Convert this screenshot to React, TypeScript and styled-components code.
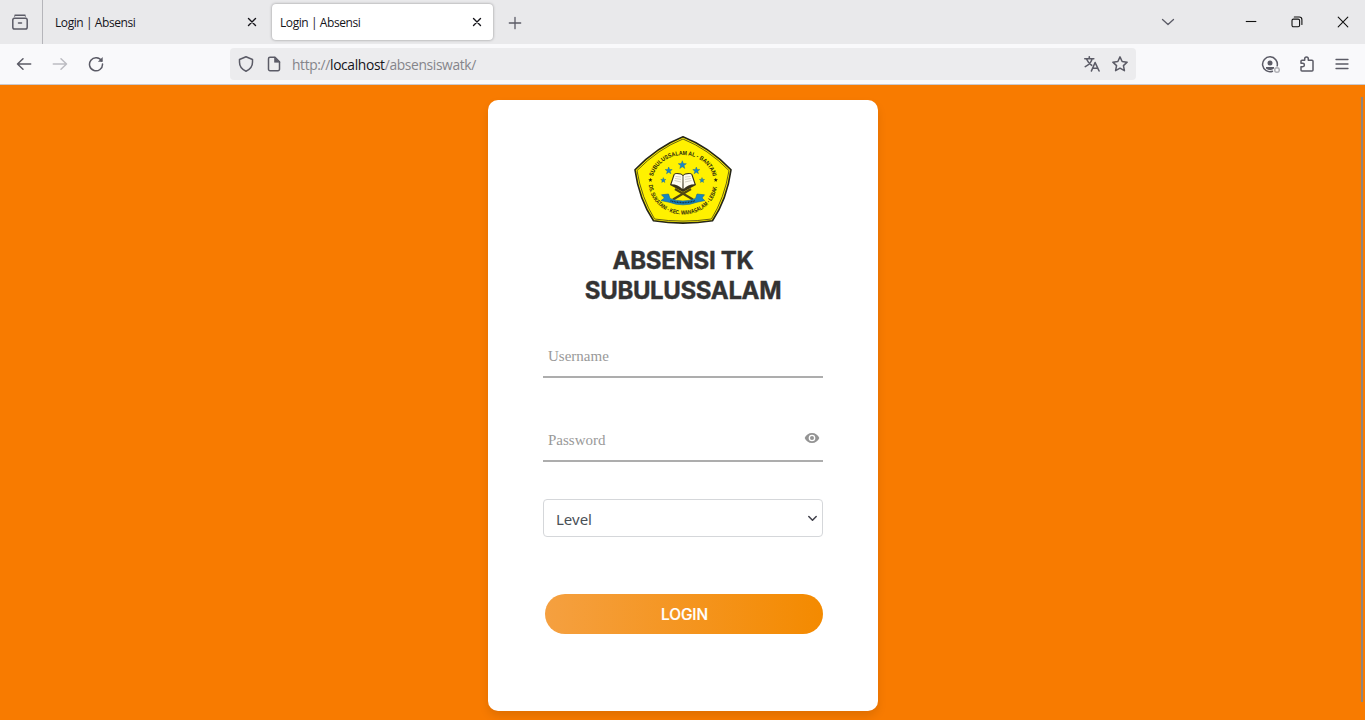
import React from "react";
import styled, { createGlobalStyle } from "styled-components";

const GlobalStyle = createGlobalStyle`
  * { box-sizing: border-box; }
  body { margin: 0; overflow: hidden; font-family: "Noto Sans", "Open Sans", sans-serif; }
`;

const Window = styled.div`
  display: flex;
  flex-direction: column;
  width: 100%;
  height: 100vh;
  overflow: hidden;
`;

const TabBar = styled.div`
  display: flex;
  align-items: center;
  flex: none;
  height: 44px;
  background: #e9e9eb;
`;

const Overview = styled.div`
  display: flex;
  align-items: center;
  justify-content: center;
  width: 43px;
  height: 44px;
  padding-right: 2px;
  border-right: 1px solid #b5b5ba;
`;

const Tab = styled.div<{ $active?: boolean }>`
  display: flex;
  align-items: center;
  justify-content: space-between;
  width: ${(p) => (p.$active ? 221 : 225)}px;
  height: 36px;
  margin-left: ${(p) => (p.$active ? 4 : 0)}px;
  padding: 0 10px 0 ${(p) => (p.$active ? 8 : 12)}px;
  border-radius: 4px;
  background: ${(p) => (p.$active ? "#fff" : "transparent")};
  box-shadow: ${(p) => (p.$active ? "0 0 3px rgba(0,0,0,.38)" : "none")};
`;

const TabTitle = styled.span`
  padding-top: 2px;
  font: 12px/18px "Open Sans", sans-serif;
  letter-spacing: -0.42px;
  color: #15141a;
`;

const NewTab = styled.div`
  display: flex;
  margin-left: 14px;
  padding-top: 1px;
`;

const WindowControls = styled.div`
  display: flex;
  align-items: center;
  margin-left: auto;
  padding-right: 16px;
`;

const ControlSlot = styled.div<{ $gap?: number }>`
  display: flex;
  margin-left: ${(p) => p.$gap ?? 0}px;
`;

const Toolbar = styled.div`
  display: flex;
  align-items: center;
  flex: none;
  height: 41px;
  padding: 0 15px 0 16px;
  background: #f9f9fb;
  border-bottom: 1px solid #c9c9ce;
`;

const NavButtons = styled.div`
  display: flex;
  gap: 20px;
  width: 214px;
`;

const AddressBar = styled.div`
  display: flex;
  align-items: center;
  width: 906px;
  height: 32px;
  padding: 0 8px;
  border-radius: 4px;
  background: #ececee;
`;

const Url = styled.div`
  flex: 1;
  margin-left: 10px;
  padding-top: 2px;
  font: 13.8px/20px "Open Sans", sans-serif;
  letter-spacing: -0.35px;
  color: #85858a;
`;

const Host = styled.span`
  color: #15141a;
`;

const AddressIcons = styled.div`
  display: flex;
  gap: 12px;
`;

const ToolIcons = styled.div`
  display: flex;
  align-items: center;
  gap: 19px;
  margin-left: auto;
`;

const Page = styled.main`
  position: relative;
  flex: 1;
  display: flex;
  justify-content: center;
  align-items: flex-start;
  padding-top: 15px;
  background: #f87b00;
`;

const ScrollThumb = styled.div`
  position: absolute;
  top: 12px;
  right: 2px;
  width: 2px;
  height: 605px;
  background: #8b8580;
`;

const Card = styled.form`
  display: flex;
  flex-direction: column;
  align-items: center;
  width: 390px;
  height: 611px;
  margin-left: 1px;
  padding: 34px 55px 0;
  border-radius: 10px;
  background: #fff;
  box-shadow: 0 5px 10px rgba(0, 0, 0, 0.1);
`;

const Title = styled.h1`
  display: flex;
  flex-direction: column;
  align-items: center;
  margin: 20px 0 0;
  font: 700 24px/30px Inter, sans-serif;
  color: #333;
  -webkit-text-stroke: 0.4px #333;
`;

const TitleLine = styled.span<{ $spacing: number }>`
  letter-spacing: ${(p) => p.$spacing}px;
  white-space: nowrap;
`;

const Field = styled.label<{ $top: number }>`
  display: flex;
  justify-content: space-between;
  align-items: flex-start;
  width: 280px;
  height: 44px;
  margin-top: ${(p) => p.$top}px;
  padding: 12px 4px 0 5px;
  border-bottom: 2px solid #adadad;
  font: 15px/20px "Liberation Serif", serif;
  color: #999;
`;

const EyeIcon = styled.svg`
  width: 16px;
  height: 16px;
  margin: -0.5px -0.5px 0 0;
  fill: #949494;
`;

const LevelSelect = styled.div`
  display: flex;
  align-items: center;
  justify-content: space-between;
  width: 280px;
  height: 38px;
  margin-top: 37px;
  padding: 2px 4px 0 12px;
  border: 1px solid #d5d7da;
  border-radius: 4px;
  font: 15px/24px "Noto Sans", sans-serif;
  color: #495057;
`;

const LoginButton = styled.button`
  width: 278px;
  height: 40px;
  margin: 57px 0 0 2px;
  padding: 2px 0 0 1px;
  border: 0;
  border-radius: 20px;
  background: linear-gradient(to right, #f5a040, #f48a00);
  font: 500 15.4px/38px Inter, sans-serif;
  letter-spacing: -0.05px;
  color: #fff;
  -webkit-text-stroke: 0.2px #fff;
`;

const Icon = ({ size = 16, color = "#5b5b66", w = 1.3, children }: {
  size?: number; color?: string; w?: number; children: React.ReactNode;
}) => (
  <svg width={size} height={size} viewBox={`0 0 ${size} ${size}`} fill="none" stroke={color}
    strokeWidth={w} strokeLinecap="round" strokeLinejoin="round">{children}</svg>
);

const CloseIcon = () => (
  <Icon size={12} color="#15141a" w={1.4}><path d="M2.500 2.500l7 7M9.500 2.500l-7 7" /></Icon>
);

const starPath = (cx: number, cy: number, r: number) =>
  Array.from({ length: 10 }, (_, i) => {
    const a = (Math.PI / 5) * i - Math.PI / 2;
    const d = i % 2 ? r * 0.42 : r;
    return `${i ? "L" : "M"}${(cx + d * Math.cos(a)).toFixed(2)} ${(cy + d * Math.sin(a)).toFixed(2)}`;
  }).join("") + "Z";

const Emblem = () => (
  <svg width="100" height="92" viewBox="0 0 100 92">
    <defs>
      <path id="upperArc" d="M19.500 48A30.500 27 0 0 1 80.500 48" />
      <path id="lowerArc" d="M15.8 49A34 31.3 0 0 0 84.2 49" />
    </defs>
    <path d="M50 2.8Q76 13 98 35.8Q94 65 79.5 86.8Q50 91.5 20.5 86.8Q6 65 2 35.8Q24 13 50 2.8Z"
      fill="#fff100" stroke="#252516" strokeWidth="1.6" strokeLinejoin="round" />
    <path d="M50 5Q75 15 96 36.6Q91.5 64 78.4 85Q50 89.2 21.6 85Q8.5 64 4 36.6Q25 15 50 5Z"
      fill="none" stroke="#55511b" strokeWidth=".9" />
    <g fill="#24230f" fontFamily="Liberation Sans, sans-serif" fontWeight="700" fontSize="6">
      <text><textPath href="#upperArc" startOffset="5.5" textLength="79" lengthAdjust="spacingAndGlyphs">SUBULUSSALAM AL - BANTANI</textPath></text>
      <text fontSize="5.8"><textPath href="#lowerArc" startOffset="2" textLength="97" lengthAdjust="spacingAndGlyphs">DS. SUKATANI - KEC. WANASALAM - LEBAK</textPath></text>
    </g>
    <path d={starPath(17.4, 46, 2.3) + starPath(82.8, 46, 2.3)} fill="#24230f" />
    <path d={starPath(49.3, 31, 4.3) + starPath(35.7, 36.7, 3.7) + starPath(63.3, 36.7, 3.7) + starPath(30.3, 46.3, 2.7) + starPath(69, 46.3, 2.7)}
      fill="#1688c9" stroke="#176391" strokeWidth=".4" />
    <path d="M42 55L60 65.5M58 55L40 65.5" stroke="#514710" strokeWidth="2.2" />
    <path d="M40.5 40.5L37 51L50 58L63 51L59.5 40.5L58 39.3Q52 38.5 50 41Q48 38.5 42 39.3Z" fill="#39331a" />
    <path d="M41.8 40.2Q48 39.7 49.6 42L49.4 55Q45 50.5 38.5 50.3ZM58.2 40.2Q52 39.7 50.4 42L50.6 55Q55 50.5 61.5 50.3Z" fill="#fffdf0" />
    <path d="M42.5 42.5L48 43M42 44.5L48 45.4M41.5 46.5L48 48M57.5 42.5L52 43M58 44.5L52 45.4M58.5 46.5L52 48" stroke="#aaa695" strokeWidth=".5" />
    <path d="M28.5 60.8L35.5 60L37 64.5Q50 69.5 62.5 64.5L64 60L71.5 60.8L69 64L71.8 66.6L64 68.2Q50 73.5 36 68.2L28 66.6L31.5 64Z"
      fill="#1587c5" stroke="#17648f" strokeWidth=".6" />
    <path d="M37.5 66.8Q50 70.5 62 66.8" fill="none" stroke="#15364d" strokeWidth="1.5" strokeDasharray="1.1 .5" />
  </svg>
);

const BrowserChrome = () => (
  <>
    <TabBar>
      <Overview>
        <Icon w={1.5}><path d="M3 1.3h10" /><rect x=".8" y="4.2" width="14.4" height="10.8" rx="1.8" /><path d="M2.3 3l1-1.5M13.7 3l-1-1.5" strokeWidth=".7" /><path d="M6.5 9h3" /></Icon>
      </Overview>
      <Tab><TabTitle>Login | Absensi</TabTitle><CloseIcon /></Tab>
      <Tab $active><TabTitle>Login | Absensi</TabTitle><CloseIcon /></Tab>
      <NewTab><Icon><path d="M8 2.3v11.4M2.3 8h11.4" /></Icon></NewTab>
      <WindowControls>
        <ControlSlot><Icon><path d="M2.5 5.5L8 10.6l5.5-5.1" /></Icon></ControlSlot>
        <ControlSlot $gap={69}><Icon size={12} color="#111" w={1.1}><path d="M.8 5.5h10.5" strokeLinecap="butt" /></Icon></ControlSlot>
        <ControlSlot $gap={34}><Icon size={12} color="#111" w={1.1}><rect x="1" y="3.1" width="7.6" height="7.6" rx="1.4" /><path d="M3.3 1h4.9a2.7 2.7 0 0 1 2.7 2.7v4.8" /></Icon></ControlSlot>
        <ControlSlot $gap={34}><Icon size={12} color="#111" w={1.1}><path d="M1.2 1.2l9.6 9.6M10.8 1.2l-9.6 9.6" /></Icon></ControlSlot>
      </WindowControls>
    </TabBar>
    <Toolbar>
      <NavButtons>
        <Icon w={1.5}><path d="M14.7 8H1.5M7 2.7L1.5 8 7 13.3" /></Icon>
        <Icon w={1.5} color="#bcbcc2"><path d="M1.3 8h13.2M9 2.7L14.5 8 9 13.3" /></Icon>
        <Icon w={1.5}><path d="M13.6 5A6.5 6.5 0 1 0 14.5 8" /><path d="M14.7 1v4.8H9.9z" fill="#5b5b66" stroke="none" /></Icon>
      </NavButtons>
      <AddressBar>
        <Icon w={1.5}><path d="M8 .8l6.5 2.7v2.8c0 4-2 7-6.5 8.9C3.5 13.3 1.5 10.3 1.5 6.3V3.5z" /></Icon>
        <ControlSlot $gap={12}><Icon w={1.5}><path d="M4 1.3h5l4.5 4.5v7.4a1.5 1.5 0 0 1-1.5 1.5H4A1.5 1.5 0 0 1 2.5 13.2V2.8A1.5 1.5 0 0 1 4 1.3z" /><path d="M8.5 1.3v5h5z" fill="#5b5b66" strokeWidth=".6" /></Icon></ControlSlot>
        <Url>http://<Host>localhost</Host>/absensiswatk/</Url>
        <AddressIcons>
          <Icon w={1.6}><path d="M.8 2.8h9M5.3.8v2M8 2.8C7.4 6.3 5 8.6 1.3 10.6M2.8 3.5C4 6.2 5.4 8 7.6 9.3M7.4 15l3.7-8.5L15.1 15M8.6 12.3h5.3" /></Icon>
          <Icon w={1.5}><path d="M8 .9l2.15 4.6 5 .65-3.7 3.5.95 5L8 12.2l-4.4 2.45.95-5L.85 6.15l5-.65z" /></Icon>
        </AddressIcons>
      </AddressBar>
      <ToolIcons>
        <Icon size={19} w={1.5}><path d="M16.2 10.8A7.4 7.4 0 1 0 11.5 16.2" /><circle cx="9" cy="8" r="2.5" fill="#5b5b66" stroke="none" /><path d="M5 12.100h8v1.300Q9 16.700 5 13.400z" fill="#5b5b66" stroke="none" /><circle cx="16" cy="15" r="2.300" stroke="#b1b1b6" /></Icon>
        <Icon w={1.5}><path d="M5.7 4.3V2.8a1.8 1.8 0 0 1 3.6 0v1.5H13a1 1 0 0 1 1 1V14a1 1 0 0 1-1 1H3a1 1 0 0 1-1-1v-3.3h1.7a1.700 1.700 0 0 0 0-3.400H2v-2a1 1 0 0 1 1-1z" /></Icon>
        <Icon><path d="M2 3.500h12M2 8h12M2 12.500h12" /></Icon>
      </ToolIcons>
    </Toolbar>
  </>
);

export default function App() {
  return (
    <Window>
      <GlobalStyle />
      <BrowserChrome />
      <Page>
        <Card>
          <Emblem />
          <Title>
            <TitleLine $spacing={-0.3}>ABSENSI TK</TitleLine>
            <TitleLine $spacing={-0.37}>SUBULUSSALAM</TitleLine>
          </Title>
          <Field $top={28}>Username</Field>
          <Field $top={40}>
            Password
            <EyeIcon viewBox="0 0 24 24">
              <path fillRule="evenodd" d="M12 4.5C7 4.5 2.73 7.61 1 12c1.73 4.39 6 7.5 11 7.5s9.27-3.11 11-7.5c-1.73-4.39-6-7.5-11-7.5zM12 17a5 5 0 1 1 0-10 5 5 0 0 1 0 10zm0-8a3 3 0 1 0 0 6 3 3 0 0 0 0-6z" />
            </EyeIcon>
          </Field>
          <LevelSelect>
            Level
            <Icon size={11} color="#41414b" w={1.5}><path d="M1.8 2.5L5.5 6.3l3.7-3.8" /></Icon>
          </LevelSelect>
          <LoginButton type="button">LOGIN</LoginButton>
        </Card>
        <ScrollThumb />
      </Page>
    </Window>
  );
}
